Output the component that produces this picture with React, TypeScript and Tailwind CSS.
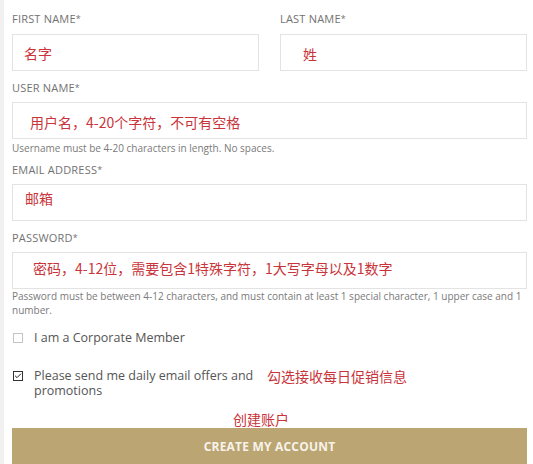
import { Check } from "lucide-react";

const sans = { fontFamily: "'Open Sans', 'Noto Sans CJK SC', sans-serif" };
const cjk = { fontFamily: "'Noto Sans CJK SC', sans-serif" };

function Label({ text }: { text: string }) {
  return (
    <div className="h-[14px] text-[11px] leading-[14px] font-medium uppercase tracking-[0.2px] text-[#727272]">
      {text}
      <span className="text-[9px] align-top">*</span>
    </div>
  );
}

function Field({ hint, className = "" }: { hint: string; className?: string }) {
  return (
    <div className={`h-[37px] border border-[#e3e3e3] bg-white text-[14px] text-[#c9343a] ${className}`} style={cjk}>
      {hint}
    </div>
  );
}

export default function App() {
  return (
    <div className="flex w-[533px] h-[464px] overflow-hidden bg-white" style={sans}>
      <div className="w-[4px] shrink-0 bg-[#f1f1f1]" />
      <div className="flex-1 pl-[8px] pr-[8px]">
        <div className="grid grid-cols-2 gap-[21px] pt-[12px]">
          <div>
            <Label text="First Name" />
            <Field hint="名字" className="mt-[8px] pl-[11px] pt-[8px]" />
          </div>
          <div>
            <Label text="Last Name" />
            <Field hint="姓" className="mt-[8px] pl-[22px] pt-[9px]" />
          </div>
        </div>

        <div className="mt-[10px]">
          <Label text="User Name" />
          <Field hint="用户名，4-20个字符，不可有空格" className="mt-[7px] pl-[17px] pt-[9px]" />
          <div className="mt-[3px] text-[10px] leading-[13px] text-[#7a7a7a]">
            Username must be 4-20 characters in length. No spaces.
          </div>
        </div>

        <div className="mt-[8px]">
          <Label text="Email Address" />
          <Field hint="邮箱" className="mt-[7px] pl-[12px] pt-[3px] h-[36px]" />
        </div>

        <div className="mt-[10px]">
          <Label text="Password" />
          <Field hint="密码，4-12位，需要包含1特殊字符，1大写字母以及1数字" className="mt-[7px] pl-[20px] pt-[5px] h-[36px]" />
          <div className="mt-[0px] text-[10px] leading-[14px] text-[#7a7a7a]">
            Password must be between 4-12 characters, and must contain at least 1 special character, 1 upper case and 1
            number.
          </div>
        </div>

        <div className="mt-[13px] flex items-center text-[12.5px] leading-[16px] text-[#555]">
          <span className="ml-[1px] w-[10px] h-[10px] border border-[#c4c4c4] bg-white" />
          <span className="ml-[11px]">I am a Corporate Member</span>
        </div>

        <div className="mt-[22px] flex items-start text-[12.5px] leading-[15px] text-[#555]">
          <span className="ml-[1px] mt-[3px] w-[10px] h-[10px] border border-[#333] bg-white flex items-center justify-center">
            <Check className="w-[8px] h-[8px] text-[#222]" strokeWidth={3} />
          </span>
          <span className="ml-[11px] w-[233px]">Please send me daily email offers and promotions</span>
          <span className="text-[14px] leading-[16px] text-[#c9343a]" style={cjk}>
            勾选接收每日促销信息
          </span>
        </div>

        <div className="mt-[12px] pl-[221px] text-[14px] leading-[18px] text-[#c9343a]" style={cjk}>
          创建账户
        </div>

        <button className="w-[515px] h-[38px] bg-[#bba573] text-[#f7f3ea] text-[12px] font-bold tracking-[0.2px] uppercase flex items-center justify-center">
          Create my account
        </button>
      </div>
    </div>
  );
}
